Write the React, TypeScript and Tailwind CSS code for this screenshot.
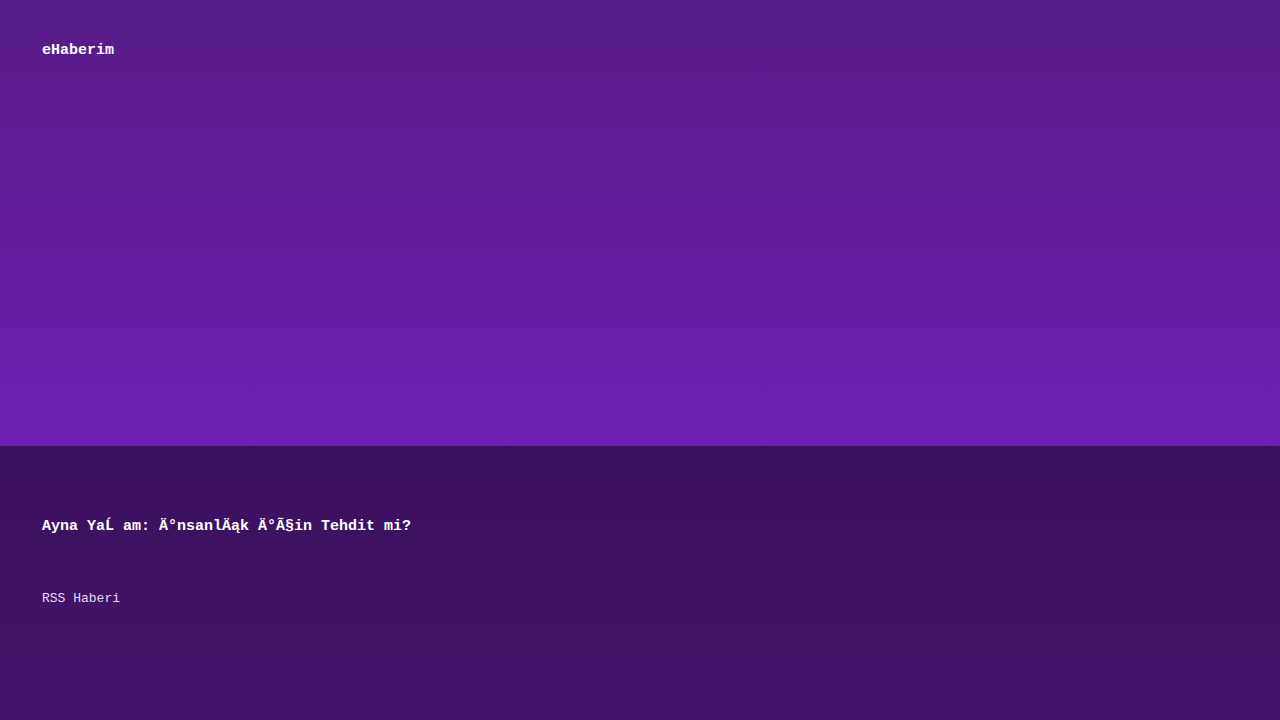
export default function App() {
  return (
    <div className="w-full h-[720px] flex flex-col font-['Liberation_Mono',monospace] text-white">
      {/* Hero */}
      <div className="h-[446px] bg-gradient-to-b from-[#561b86] to-[#6e1fb2] px-[42px] pt-[42px]">
        <div className="text-[15px] leading-[18px] font-bold">eHaberim</div>
      </div>

      {/* Story */}
      <div className="flex-1 bg-gradient-to-b from-[#3a115e] to-[#43146b] px-[42px] pt-[72px]">
        <h1 className="text-[15px] leading-[18px] font-bold">
          Ayna YaĹ am: Ä°nsanlÄąk Ä°Ã§in Tehdit mi?
        </h1>
        <p className="mt-[54px] text-[13px] leading-[17px] text-[#e9dcf5]">RSS Haberi</p>
      </div>
    </div>
  );
}
